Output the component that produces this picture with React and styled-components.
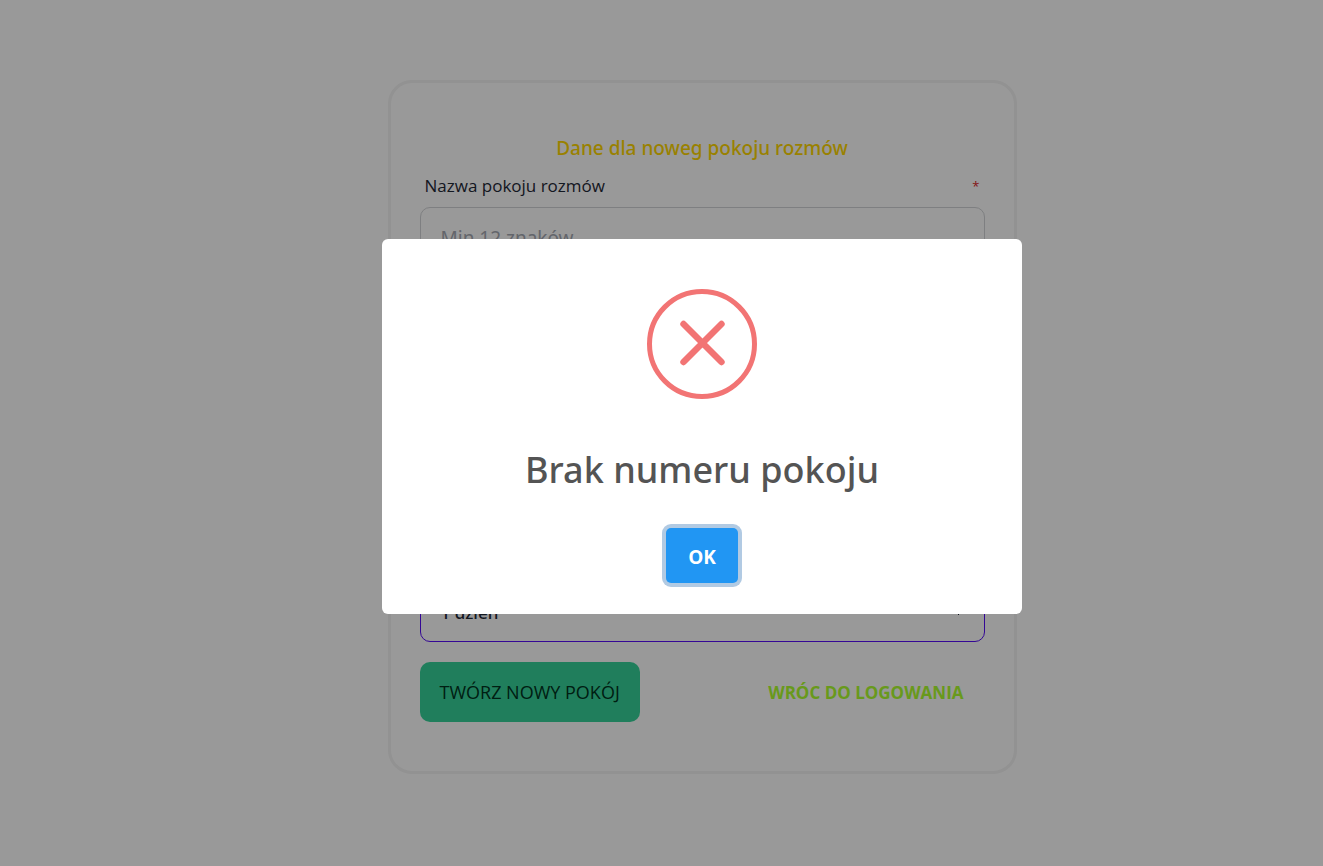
import React from 'react';
import styled, { createGlobalStyle } from 'styled-components';

const mediumFont = '"Segoe UI", "Noto Sans", "Open Sans", sans-serif';

const GlobalStyle = createGlobalStyle`
  *, *::before, *::after { box-sizing: border-box; }
  body {
    margin: 0;
    background: #ffffff;
    color: #1f2937;
    font-family: "Segoe UI", "Open Sans", "Noto Sans", sans-serif;
  }
  button, input, select { font: inherit; color: inherit; }
`;

const Page = styled.main`
  display: flex;
  align-items: center;
  justify-content: center;
  min-height: 100vh;
  padding: 0 0 12px 81px;
`;

const Card = styled.form`
  display: flex;
  flex-direction: column;
  width: 100%;
  max-width: 629px;
  padding: 50px 29px 49px;
  border: 3px solid #f3f3f3;
  border-radius: 24px;
`;

const Heading = styled.h1`
  margin: 0;
  text-align: center;
  font-family: ${mediumFont};
  font-size: 19px;
  font-weight: 500;
  line-height: 30px;
  color: #ffd700;
`;

const Fields = styled.div`
  display: flex;
  flex-direction: column;
  gap: 315px;
`;

const Field = styled.div`
  display: flex;
  flex-direction: column;
`;

const LabelRow = styled.div`
  display: flex;
  justify-content: space-between;
  padding: 9px 5px 7px;
  line-height: 28px;
`;

const Label = styled.label`
  font-size: 17px;
`;

const Required = styled.span`
  font-size: 13px;
  color: #dc2626;
`;

const TextInput = styled.input`
  width: 100%;
  height: 60px;
  padding: 2px 20px 0;
  border: 1px solid #d2d4d7;
  border-radius: 10px;
  background: transparent;
  font-family: ${mediumFont};
  font-size: 19px;

  &::placeholder { color: #a5a9b2; opacity: 1; }
`;

const Select = styled.select`
  appearance: none;
  width: 100%;
  height: 60px;
  padding: 0 50px 0 20px;
  border: 1px solid #570df8;
  border-radius: 10px;
  background-color: transparent;
  background-image:
    linear-gradient(45deg, transparent 50%, currentColor 50%),
    linear-gradient(135deg, currentColor 50%, transparent 50%);
  background-position: calc(100% - 25px) calc(50% + 1px), calc(100% - 21px) calc(50% + 1px);
  background-size: 4px 4px;
  background-repeat: no-repeat;
  font-family: ${mediumFont};
  font-size: 17px;
  font-weight: 500;
`;

const Actions = styled.div`
  display: flex;
  align-items: center;
  justify-content: space-between;
  margin-top: 20px;
`;

const SubmitButton = styled.button`
  height: 60px;
  padding: 0 20px;
  border: 0;
  border-radius: 10px;
  background: #36d399;
  color: #003320;
  font-size: 18px;
`;

const BackLink = styled.a`
  padding: 2px 21px 0;
  color: #adff2f;
  font-size: 17px;
  font-weight: 700;
  line-height: 58px;
  text-decoration: none;
`;

const Overlay = styled.div`
  position: fixed;
  inset: 0;
  display: flex;
  align-items: center;
  justify-content: center;
  padding: 0 0 13px 81px;
  background: rgba(0, 0, 0, 0.4);
`;

const Dialog = styled.section`
  display: flex;
  flex-direction: column;
  align-items: center;
  width: 100%;
  max-width: 640px;
  padding: 50px 20px 31px;
  border-radius: 6px;
  background: #ffffff;
`;

const ErrorIcon = styled.svg`
  display: block;
  width: 110px;
  height: 110px;
`;

const DialogTitle = styled.h2`
  margin: 44px 0 31px;
  font-family: ${mediumFont};
  font-size: 36px;
  font-weight: 500;
  line-height: 54px;
  color: #545454;
`;

const ConfirmButton = styled.button`
  height: 55px;
  padding: 2px 22px 0;
  border: 0;
  border-radius: 5px;
  outline: none;
  background: #2196f3;
  box-shadow: 0 0 0 4px #b1cae3;
  color: #ffffff;
  font-size: 19px;
  font-weight: 700;
`;

export default function App() {
  return (
    <>
      <GlobalStyle />
      <Page>
        <Card>
          <Heading>Dane dla noweg pokoju rozmów</Heading>
          <Fields>
            <Field>
              <LabelRow>
                <Label htmlFor="room-name">Nazwa pokoju rozmów</Label>
                <Required>*</Required>
              </LabelRow>
              <TextInput id="room-name" type="text" placeholder="Min 12 znaków" />
            </Field>
            <Select aria-label="Ważność pokoju" defaultValue="1">
              <option value="1">1 dzień</option>
            </Select>
          </Fields>
          <Actions>
            <SubmitButton type="button">TWÓRZ NOWY POKÓJ</SubmitButton>
            <BackLink href="#login">WRÓC DO LOGOWANIA</BackLink>
          </Actions>
        </Card>
      </Page>
      <Overlay>
        <Dialog role="alertdialog" aria-modal="true" aria-labelledby="dialog-title">
          <ErrorIcon viewBox="0 0 110 110" fill="none" stroke="#f27474" aria-hidden="true">
            <circle cx="55" cy="55" r="52.5" strokeWidth="5" />
            <path d="M36.5 35L74.5 73M74.5 35L36.5 73" strokeWidth="6.4" strokeLinecap="round" />
          </ErrorIcon>
          <DialogTitle id="dialog-title">Brak numeru pokoju</DialogTitle>
          <ConfirmButton type="button">OK</ConfirmButton>
        </Dialog>
      </Overlay>
    </>
  );
}
